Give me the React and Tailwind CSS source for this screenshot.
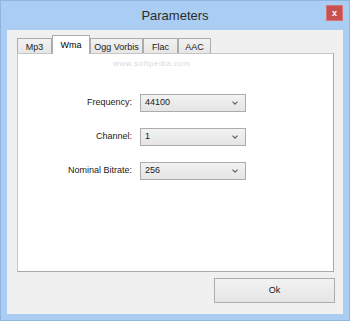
import React from 'react';

const tabs = [
  { name: 'Mp3', w: 'w-[35px]' },
  { name: 'Wma', w: 'w-[38px]', active: true },
  { name: 'Ogg Vorbis', w: 'w-[53px]' },
  { name: 'Flac', w: 'w-[35px]' },
  { name: 'AAC', w: 'w-[33px]' },
];

const fields = [
  { label: 'Frequency:', value: '44100' },
  { label: 'Channel:', value: '1' },
  { label: 'Nominal Bitrate:', value: '256' },
];

const Chevron = () => (
  <svg width="6" height="4" viewBox="0 0 6 4" className="shrink-0">
    <path d="M0.5 0.6 L3 3.2 L5.5 0.6" fill="none" stroke="#606060" strokeWidth="1.1" />
  </svg>
);

const Combo = ({ value }) => (
  <div className="w-[106px] h-[18px] flex items-center justify-between pl-[4px] pr-[7px] border border-[#acacac] bg-gradient-to-b from-[#f2f2f2] to-[#e5e5e5] text-[#1a1a1a]">
    <span>{value}</span>
    <Chevron />
  </div>
);

export default function App() {
  return (
    <div
      className="w-[350px] h-[321px] bg-[#aacdf3] border border-[#8fb5e0] flex flex-col text-[9px] text-black"
      style={{ fontFamily: '"Liberation Sans", Arial, sans-serif' }}
    >
      {/* title bar */}
      <div className="relative h-[29px] shrink-0 flex items-center justify-center">
        <span className="text-[13px] text-[#2b2b2b]">Parameters</span>
        <div className="absolute right-[6px] top-[4px] w-[17px] h-[16px] bg-[#c75050] border border-[#d87676] flex items-center justify-center">
          <span className="text-white font-bold text-[9px] leading-none">x</span>
        </div>
      </div>

      {/* client area */}
      <div className="flex-1 mx-[6px] mb-[6px] bg-[#f0f0f0] flex flex-col pt-[5px] pl-[10px] pr-[9px]">
        {/* tab strip */}
        <div className="relative flex items-end h-[18px]">
          {tabs.map((t) =>
            t.active ? (
              <div
                key={t.name}
                className={`${t.w} h-[19px] -mb-px relative z-10 bg-white border border-b-0 border-[#acacac] flex justify-center pt-[3px]`}
              >
                {t.name}
              </div>
            ) : (
              <div
                key={t.name}
                className={`${t.w} h-[15px] border border-b-0 border-[#acacac] bg-gradient-to-b from-[#f2f2f2] to-[#e6e6e6] flex justify-center pt-[2px] text-[#1a1a1a]`}
              >
                {t.name}
              </div>
            )
          )}
          <span className="absolute left-[96px] top-[23px] text-[8px] text-[#d9d9d9] tracking-[0.5px] z-20">
            www.softpedia.com
          </span>
        </div>

        {/* tab page */}
        <div className="h-[219px] bg-white border border-[#c6c6c6] border-r-[#a8a8a8] border-b-[#a8a8a8] flex flex-col gap-[16px] pt-[40px]">
          {fields.map((f) => (
            <div key={f.label} className="flex items-center gap-[8px]">
              <span className="w-[114px] text-right text-[#1a1a1a]">{f.label}</span>
              <Combo value={f.value} />
            </div>
          ))}
        </div>

        {/* buttons */}
        <div className="flex justify-end mt-[6px] -mr-[1px]">
          <div className="w-[121px] h-[25px] border border-[#acacac] bg-gradient-to-b from-[#f2f2f2] to-[#e5e5e5] flex items-center justify-center text-[#1a1a1a]">
            Ok
          </div>
        </div>
      </div>
    </div>
  );
}
